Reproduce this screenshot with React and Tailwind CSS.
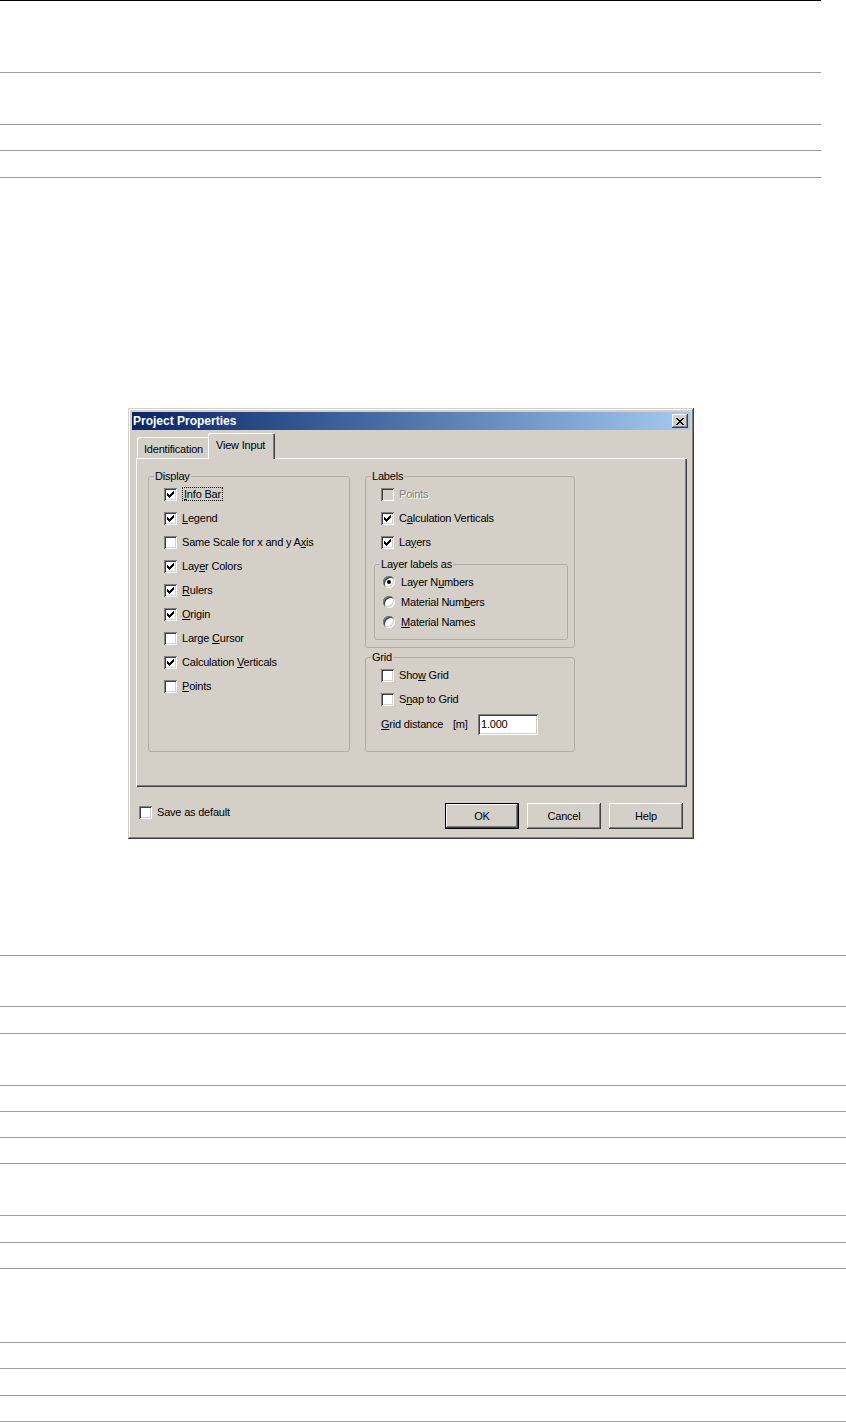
import React from 'react';

const FACE = 'bg-[#d4d0c8]';

const topLines = ['h-[72px]', 'h-[52px]', 'h-[26px]', 'h-[27px]'];
const bottomLines = [
  'h-[117px]', 'h-[51px]', 'h-[27px]', 'h-[52px]', 'h-[26px]', 'h-[26px]', 'h-[26px]',
  'h-[52px]', 'h-[27px]', 'h-[26px]', 'h-[74px]', 'h-[26px]', 'h-[27px]', 'h-[26px]',
];

// classic 7x7 check mark, one rect per pixel run
const checkRuns = [
  [6, 0, 1], [5, 1, 2], [0, 2, 1], [4, 2, 3], [0, 3, 2], [3, 3, 3], [0, 4, 5], [1, 5, 3], [2, 6, 1],
];

const closeRuns = [
  [0, 0, 2], [6, 0, 2], [1, 1, 2], [5, 1, 2], [2, 2, 4], [3, 3, 2], [2, 4, 4], [1, 5, 2], [5, 5, 2], [0, 6, 2], [6, 6, 2],
];

const Check = ({ checked, disabled }) => (
  <span
    className={`flex h-[13px] w-[13px] shrink-0 items-center justify-center ${disabled ? FACE : 'bg-white'} shadow-[inset_1px_1px_#808080,inset_-1px_-1px_#fff,inset_2px_2px_#404040,inset_-2px_-2px_#d4d0c8]`}
  >
    {checked && (
      <svg width="7" height="7" viewBox="0 0 7 7" shapeRendering="crispEdges">
        {checkRuns.map(([x, y, w], i) => (
          <rect key={i} x={x} y={y} width={w} height="1" fill="#000" />
        ))}
      </svg>
    )}
  </span>
);

const Radio = ({ on }) => (
  <span className="flex h-[12px] w-[12px] shrink-0 items-center justify-center rounded-full bg-white shadow-[inset_1px_1px_#808080,inset_-1px_-1px_#fff,inset_2px_2px_#404040,inset_-2px_-2px_#d4d0c8]">
    {on && <span className="h-[4px] w-[4px] rounded-full bg-black" />}
  </span>
);

const U = ({ children }) => <span className="underline underline-offset-[1px]">{children}</span>;

const CheckRow = ({ checked, disabled, children }) => (
  <div className="flex h-[16px] items-center gap-[5px]">
    <Check checked={checked} disabled={disabled} />
    <span className={disabled ? 'text-[#808080] [text-shadow:1px_1px_0_#fff]' : ''}>{children}</span>
  </div>
);

const RadioRow = ({ on, children }) => (
  <div className="flex h-[16px] items-center gap-[6px]">
    <Radio on={on} />
    <span>{children}</span>
  </div>
);

const Group = ({ title, className, children }) => (
  <div className={`relative rounded-[3px] border border-[#b0ada4] ${className}`}>
    <span className={`absolute -top-[8px] left-[5px] ${FACE} px-px leading-[14px]`}>{title}</span>
    {children}
  </div>
);

const Button = ({ children, isDefault }) => (
  <div className={isDefault ? 'border border-black' : ''}>
    <div
      className={`flex items-center justify-center ${isDefault ? 'h-[24px] w-[72px]' : 'h-[26px] w-[74px]'} ${FACE} shadow-[inset_-1px_-1px_#404040,inset_1px_1px_#fff,inset_-2px_-2px_#808080,inset_2px_2px_#d4d0c8]`}
    >
      {children}
    </div>
  </div>
);

export default function App() {
  return (
    <div className="min-h-[1422px] w-[846px] bg-white font-['Liberation_Sans',Arial,sans-serif] text-[11px] leading-[13px] text-black">
      <div className="w-[821px] border-t border-black">
        {topLines.map((h, i) => (
          <div key={i} className={`${h} border-b border-[#9c9c9c]`} />
        ))}
      </div>

      <div className="pt-[230px] pl-[128px]">
        <div className={`h-[431px] w-[566px] p-[4px] tracking-[-0.2px] ${FACE} shadow-[inset_-1px_-1px_#404040,inset_1px_1px_#d4d0c8,inset_-2px_-2px_#808080,inset_2px_2px_#fff]`}>
          {/* title bar */}
          <div className="flex h-[18px] items-center justify-between bg-linear-to-r from-[#0a246a] to-[#a6caf0] pl-[1px] pr-[2px]">
            <span className="text-[12px] font-bold tracking-normal text-white">Project Properties</span>
            <div className={`flex h-[14px] w-[16px] items-center justify-center ${FACE} shadow-[inset_-1px_-1px_#404040,inset_1px_1px_#fff,inset_-2px_-2px_#808080,inset_2px_2px_#d4d0c8]`}>
              <svg width="8" height="7" viewBox="0 0 8 7" shapeRendering="crispEdges">
                {closeRuns.map(([x, y, w], i) => (
                  <rect key={i} x={x} y={y} width={w} height="1" fill="#000" />
                ))}
              </svg>
            </div>
          </div>

          {/* tabs */}
          <div className="mt-[3px] flex items-end pl-[5px]">
            <div className="flex h-[21px] w-[71px] items-center rounded-tl-[2px] pl-[7px] pt-[3px] shadow-[inset_1px_1px_#fff]">
              Identification
            </div>
            <div className={`relative z-10 -mb-px flex h-[26px] w-[67px] items-center rounded-t-[2px] pl-[8px] pb-[2px] ${FACE} shadow-[inset_1px_1px_#fff,inset_-1px_0_#404040,inset_-2px_0_#808080]`}>
              View Input
            </div>
          </div>

          {/* panel */}
          <div className="ml-[4px] flex h-[329px] w-[551px] gap-[15px] pl-[12px] pt-[18px] shadow-[inset_1px_1px_#fff,inset_-1px_-1px_#404040,inset_-2px_-2px_#808080]">
            <Group title="Display" className="flex h-[276px] w-[202px] flex-col gap-[8px] pl-[15px] pt-[9px]">
              <CheckRow checked>
                <span className="border border-dotted border-black px-px">
                  <U>I</U>nfo Bar
                </span>
              </CheckRow>
              <CheckRow checked>
                <U>L</U>egend
              </CheckRow>
              <CheckRow>
                Same Scale for x and y A<U>x</U>is
              </CheckRow>
              <CheckRow checked>
                Lay<U>e</U>r Colors
              </CheckRow>
              <CheckRow checked>
                <U>R</U>ulers
              </CheckRow>
              <CheckRow checked>
                <U>O</U>rigin
              </CheckRow>
              <CheckRow>
                Large <U>C</U>ursor
              </CheckRow>
              <CheckRow checked>
                Calculation <U>V</U>erticals
              </CheckRow>
              <CheckRow>
                <U>P</U>oints
              </CheckRow>
            </Group>

            <div className="flex flex-col gap-[9px]">
              <Group title="Labels" className="h-[172px] w-[210px] pl-[15px] pt-[9px]">
                <div className="flex flex-col gap-[8px]">
                  <CheckRow disabled>Points</CheckRow>
                  <CheckRow checked>
                    C<U>a</U>lculation Verticals
                  </CheckRow>
                  <CheckRow checked>
                    La<U>y</U>ers
                  </CheckRow>
                </div>
                <Group title="Layer labels as" className="-ml-[7px] mt-[14px] flex h-[76px] w-[194px] flex-col gap-[4px] pl-[8px] pt-[9px]">
                  <RadioRow on>
                    Layer N<U>u</U>mbers
                  </RadioRow>
                  <RadioRow>
                    Material Num<U>b</U>ers
                  </RadioRow>
                  <RadioRow>
                    <U>M</U>aterial Names
                  </RadioRow>
                </Group>
              </Group>

              <Group title="Grid" className="flex h-[95px] w-[210px] flex-col pl-[15px] pt-[9px]">
                <CheckRow>
                  Sho<U>w</U> Grid
                </CheckRow>
                <div className="mt-[8px]">
                  <CheckRow>
                    S<U>n</U>ap to Grid
                  </CheckRow>
                </div>
                <div className="mt-[7px] flex h-[21px] items-center">
                  <span className="w-[72px]">
                    <U>G</U>rid distance
                  </span>
                  <span className="w-[25px]">[m]</span>
                  <div className="flex h-[21px] w-[60px] items-center bg-white pl-[3px] shadow-[inset_1px_1px_#808080,inset_-1px_-1px_#fff,inset_2px_2px_#404040,inset_-2px_-2px_#d4d0c8]">
                    1.000
                  </div>
                </div>
              </Group>
            </div>
          </div>

          {/* bottom row */}
          <div className="mt-[16px] flex items-start justify-between pl-[7px] pr-[7px]">
            <div className="mt-[3px] flex h-[13px] items-center gap-[5px]">
              <Check />
              <span>Save as default</span>
            </div>
            <div className="flex gap-[8px]">
              <Button isDefault>OK</Button>
              <Button>Cancel</Button>
              <Button>Help</Button>
            </div>
          </div>
        </div>
      </div>

      <div className="w-[846px]">
        {bottomLines.map((h, i) => (
          <div key={i} className={`${h} border-b border-[#9c9c9c]`} />
        ))}
      </div>
    </div>
  );
}
